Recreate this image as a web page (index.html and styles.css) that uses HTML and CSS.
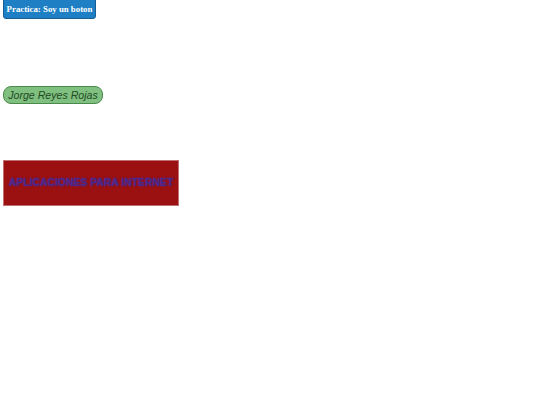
FILE: index.html
```html
<!DOCTYPE html>
<html lang="es">
<head>
<meta charset="utf-8">
<title>Practica</title>
<link rel="stylesheet" href="styles.css">
</head>
<body>
<div class="page">
  <button class="btn-blue">Practica: Soy un boton</button>
  <button class="btn-green">Jorge Reyes Rojas</button>
  <div class="box-red">APLICACIONES PARA INTERNET</div>
</div>
</body>
</html>
```
FILE: styles.css
```css
html, body { margin: 0; padding: 0; background: #fff; }
.page { display: flex; flex-direction: column; align-items: flex-start; padding: 0 3px; }
.btn-blue {
  margin-top: -4px;
  font-family: "Liberation Serif", serif;
  font-weight: bold;
  font-size: 8.8px;
  color: #fff;
  background: #1e7fc4;
  border: 1px solid #155e96;
  border-radius: 3px;
  padding: 6px 0 4px;
  height: 23px;
  width: 93px;
  line-height: 10px;
  white-space: nowrap;
  text-align: center;
}
.btn-green {
  margin-top: 67px;
  font-family: "Liberation Sans", sans-serif;
  font-style: italic;
  font-size: 10.6px;
  color: #1f4a1f;
  background: #7fbf7f;
  border: 1px solid #4b8a4b;
  border-radius: 8px;
  padding: 1px 0 0;
  height: 18px;
  width: 100px;
  line-height: 15px;
  white-space: nowrap;
  text-align: center;
}
.box-red {
  margin-top: 56px;
  width: 174px;
  height: 44px;
  box-sizing: content-box;
  background: #9b1010;
  border: 1px solid #c07070;
  font-family: "Liberation Sans", sans-serif;
  font-weight: bold;
  font-size: 10.4px;
  color: #4a2890;
  text-shadow: 0 0 2px #4a2890;
  line-height: 44px;
  text-align: center;
  white-space: nowrap;
}
```
